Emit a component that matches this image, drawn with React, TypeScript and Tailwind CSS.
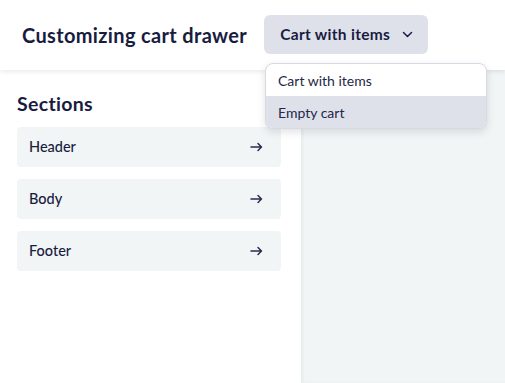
import React from "react";

const Arrow = () => (
  <svg width="13" height="10" viewBox="0 0 13 10" fill="none" stroke="#2a2d4f" strokeWidth="1.5" strokeLinecap="round" strokeLinejoin="round">
    <path d="M1 5h10.5M8 1.5L11.5 5 8 8.5" />
  </svg>
);

export default function App() {
  const items = ["Header", "Body", "Footer"];
  return (
    <div className="relative w-[505px] h-[383px] overflow-hidden bg-white text-[#181c3f]" style={{ fontFamily: "Lato, 'Noto Sans', sans-serif" }}>
      <div className="absolute left-0 top-0 w-[3px] h-[2px] bg-[#1c2257] rounded-br-full" />
      <div className="flex h-full flex-col">
        <header className="relative z-10 flex h-[70px] shrink-0 items-center gap-[17px] bg-white pl-[22px] shadow-[0_2px_5px_rgba(0,0,0,0.08)]">
          <h1 className="text-[20px] font-bold tracking-[0.35px]">Customizing cart drawer</h1>
          <button className="-mt-[1px] flex h-[39px] items-center gap-[12px] rounded-[6px] bg-[#dfe1ea] pl-[16px] pr-[15px] text-[15.5px] font-bold tracking-[0.3px]">
            Cart with items
            <svg width="11" height="7" viewBox="0 0 11 7" fill="none" stroke="#181c3f" strokeWidth="1.5" strokeLinecap="round" strokeLinejoin="round">
              <path d="M1.5 1.5L5.5 5.5 9.5 1.5" />
            </svg>
          </button>
        </header>
        <div className="flex flex-1">
          <aside className="w-[301px] shrink-0 bg-white px-[17px] pt-[19px]">
            <h2 className="mb-[9px] text-[19.5px] font-bold tracking-[0.3px]">Sections</h2>
            <div className="flex flex-col gap-[12px] pr-[3px]">
              {items.map((t) => (
                <div key={t} className="flex h-[40px] items-center justify-between rounded-[4px] bg-[#f2f5f6] pl-[12px] pr-[18px] text-[14.5px] font-medium">
                  <span>{t}</span>
                  <Arrow />
                </div>
              ))}
            </div>
          </aside>
          <main className="flex-1 bg-[#f2f5f6] shadow-[inset_2px_0_3px_rgba(0,0,0,0.04)]" />
        </div>
      </div>
      <div className="absolute left-[265px] top-[63px] z-20 w-[222px] overflow-hidden rounded-[8px] border border-[#d8dae3] bg-white shadow-[0_3px_8px_rgba(0,0,0,0.12)] text-[14px] text-[#232748]">
        <div className="flex h-[32px] items-center pl-[12px]">Cart with items</div>
        <div className="flex h-[32px] items-center bg-[#dfe1ea] pl-[12px]">Empty cart</div>
      </div>
    </div>
  );
}
